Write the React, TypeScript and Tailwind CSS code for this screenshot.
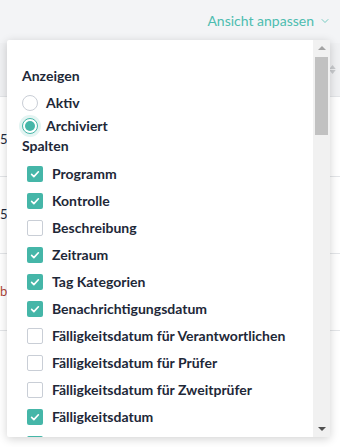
import { ChevronDown } from 'lucide-react';

const columns = [
  { label: 'Programm', checked: true },
  { label: 'Kontrolle', checked: true },
  { label: 'Beschreibung', checked: false },
  { label: 'Zeitraum', checked: true },
  { label: 'Tag Kategorien', checked: true },
  { label: 'Benachrichtigungsdatum', checked: true },
  { label: 'Fälligkeitsdatum für Verantwortlichen', checked: false },
  { label: 'Fälligkeitsdatum für Prüfer', checked: false },
  { label: 'Fälligkeitsdatum für Zweitprüfer', checked: false },
  { label: 'Fälligkeitsdatum', checked: true },
];

function Check({ checked }: { checked: boolean }) {
  if (!checked) {
    return <div className="h-4 w-4 shrink-0 rounded-[2px] border border-[#c9ced6] bg-white" />;
  }
  return (
    <div className="flex h-4 w-4 shrink-0 items-center justify-center rounded-[2px] bg-[#45b6a8]">
      <svg viewBox="0 0 16 16" className="h-3 w-3" fill="none" stroke="white" strokeWidth="2.2" strokeLinecap="round" strokeLinejoin="round">
        <path d="M3.5 8.5l3 3 6-6.5" />
      </svg>
    </div>
  );
}

function Radio({ checked }: { checked: boolean }) {
  if (!checked) {
    return <div className="h-4 w-4 shrink-0 rounded-full border border-[#c9ced6] bg-white" />;
  }
  return (
    <div className="flex h-4 w-4 shrink-0 items-center justify-center rounded-full border border-[#45b6a8] bg-white ring-[3px] ring-[#e3f4f2]">
      <div className="h-2.5 w-2.5 rounded-full bg-[#45b6a8]" />
    </div>
  );
}

export default function App() {
  return (
    <div
      className="relative h-[447px] w-[340px] overflow-hidden bg-[#f3f4f6] text-[#1e2838]"
      style={{ fontFamily: 'Lato, "Open Sans", sans-serif' }}
    >
      {/* Top bar */}
      <div className="flex h-[43px] items-start justify-end pr-[9px] pt-[10px]">
        <button className="flex items-center gap-[5px] text-[14px] text-[#4dbdb0]">
          Ansicht anpassen
          <ChevronDown className="h-3 w-3" strokeWidth={1.5} />
        </button>
      </div>

      {/* Table behind */}
      <div className="bg-white">
        <div className="flex h-[54px] items-center justify-end border-b border-[#e3e5e8] bg-[#f0f1f3] pr-[4px]">
          <div className="flex flex-col items-center text-[#c8cacd]">
            <svg viewBox="0 0 8 5" className="h-[4px] w-[7px]"><path d="M0 5L4 0l4 5z" fill="currentColor" /></svg>
            <svg viewBox="0 0 8 5" className="mt-[1px] h-[4px] w-[7px]"><path d="M0 0l4 5 4-5z" fill="currentColor" /></svg>
          </div>
        </div>
        <div className="flex h-[80px] items-center border-b border-[#e3e5e8] pt-[6px] text-[13px]">5(</div>
        <div className="flex h-[77px] items-center border-b border-[#e3e5e8] text-[13px]">5(</div>
        <div className="flex h-[77px] items-center border-b border-[#e3e5e8] text-[13px] text-[#b0473a]">b</div>
        <div className="h-[120px]" />
      </div>

      {/* Dropdown */}
      <div className="absolute left-[7px] top-[40px] flex h-[397px] w-[323px] rounded-[2px] bg-white shadow-[0_2px_10px_rgba(0,0,0,0.18)]">
        <div className="flex-1 overflow-hidden pl-[15px] pt-[27px]">
          <div className="text-[14px] font-bold leading-[18px]">Anzeigen</div>
          <div className="mt-[6px] flex h-[23px] items-center gap-[8px]">
            <Radio checked={false} />
            <span className="text-[14px] font-bold">Aktiv</span>
          </div>
          <div className="flex h-[23px] items-center gap-[8px]">
            <Radio checked />
            <span className="text-[14px] font-bold">Archiviert</span>
          </div>
          <div className="mt-[-1px] text-[14px] font-bold leading-[19px]">Spalten</div>
          <div className="mt-[5px] flex flex-col pl-[5px]">
            {columns.map((c) => (
              <div key={c.label} className="flex h-[27px] shrink-0 items-center gap-[9px]">
                <Check checked={c.checked} />
                <span className="whitespace-nowrap text-[14px] font-bold">{c.label}</span>
              </div>
            ))}
            <div className="flex h-[27px] shrink-0 items-center">
              <Check checked />
            </div>
          </div>
        </div>

        {/* Scrollbar */}
        <div className="flex w-[17px] flex-col items-center bg-[#f1f1f1] py-[6px]">
          <svg viewBox="0 0 8 4" className="h-[4px] w-[8px] text-[#a3a3a3]"><path d="M0 4L4 0l4 4z" fill="currentColor" /></svg>
          <div className="mt-[7px] h-[78px] w-[13px] bg-[#c1c1c1]" />
          <div className="flex-1" />
          <svg viewBox="0 0 8 4" className="h-[4px] w-[8px] text-[#505050]"><path d="M0 0l4 4 4-4z" fill="currentColor" /></svg>
        </div>
      </div>
    </div>
  );
}
